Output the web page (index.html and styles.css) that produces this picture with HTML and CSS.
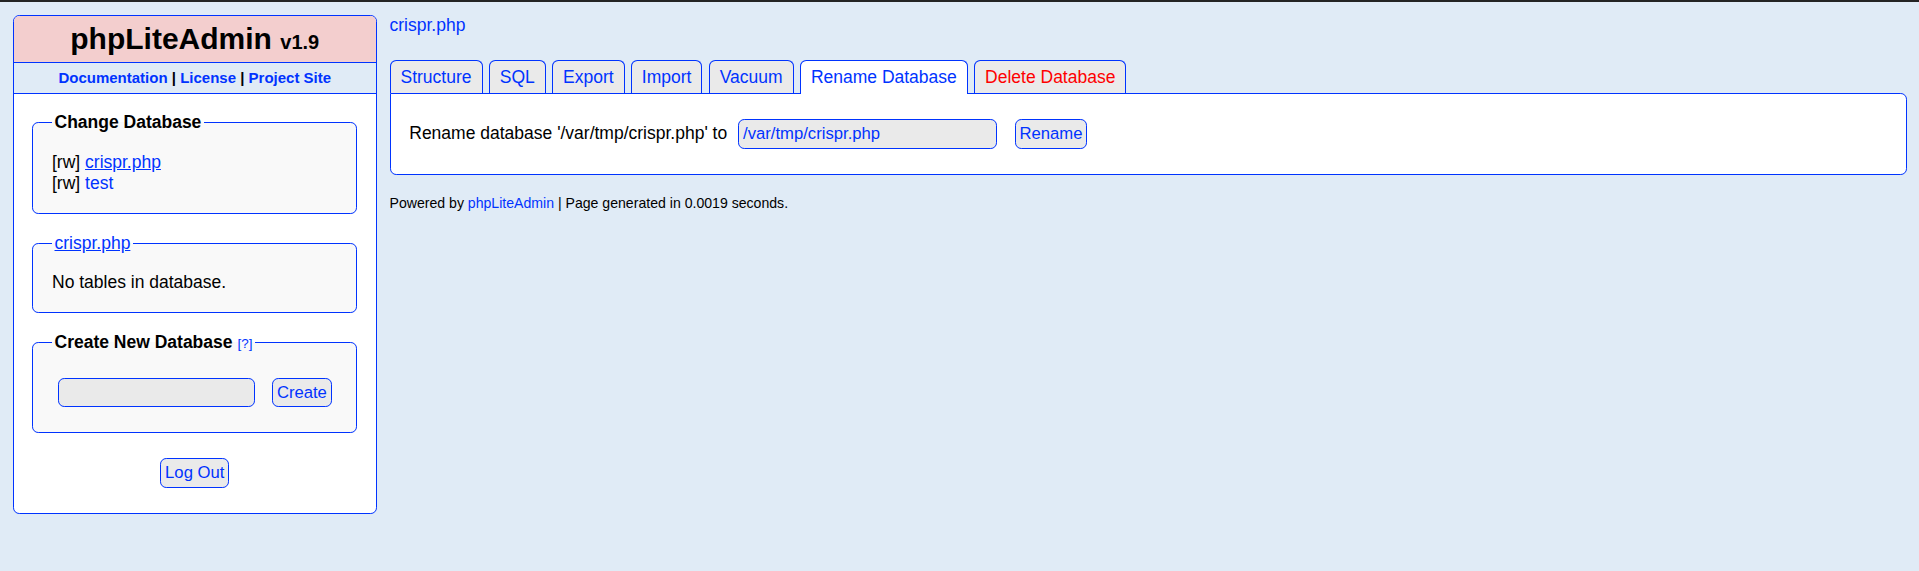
FILE: index.html
```html
<!DOCTYPE html>
<html lang="en">
<head>
  <meta charset="UTF-8">
  <meta name="viewport" content="width=device-width, initial-scale=1.0">
  <title>phpLiteAdmin</title>
<link rel="stylesheet" href="styles.css">
</head>
<body>
<div class="container">
    <div class="leftNav">
        <h1><span class="logo">phpLiteAdmin</span> <span class="version">v1.9</span></h1>
        <div class="headerlinks"><a href="#">Documentation</a> | <a href="#">License</a> | <a href="#">Project Site</a></div>
        <fieldset>
            <legend><b>Change Database</b></legend>
            [rw] <a href="#" class="active_db">crispr.php</a><br>
            [rw] <a href="#">test</a>
        </fieldset>
        <fieldset>
            <legend><a href="#" class="active_db">crispr.php</a></legend>
            No tables in database.
        </fieldset>
        <fieldset>
            <legend><b>Create New Database</b> <a href="#" class="help">[?]</a></legend>
            <form class="inline_form">
                <input type="text" class="new_db" name="new_dbname"> <input type="button" class="btn" value="Create">
            </form>
        </fieldset>
        <div class="logout">
            <input type="button" class="btn" value="Log Out">
        </div>
    </div>

    <div class="content">
        <h2><a href="#">crispr.php</a></h2>
        <div class="tabs">
            <a href="#" class="tab">Structure</a>
            <a href="#" class="tab">SQL</a>
            <a href="#" class="tab">Export</a>
            <a href="#" class="tab">Import</a>
            <a href="#" class="tab">Vacuum</a>
            <a href="#" class="tab tab_pressed">Rename Database</a>
            <a href="#" class="tab delete">Delete Database</a>
        </div>
        <div class="main">
            <form class="inline_form">
                Rename database '/var/tmp/crispr.php' to <input type="text" class="rename_to" value="/var/tmp/crispr.php"> <input type="button" class="btn" value="Rename">
            </form>
        </div>
        <div class="footer">Powered by <a href="#">phpLiteAdmin</a> | Page generated in 0.0019 seconds.</div>
    </div>
</div>
</body>
</html>
```

FILE: styles.css
```css
body {
    margin: 0;
    padding: 0;
    border-top: 2px solid #242424;
    font-family: "Liberation Sans", Arial, sans-serif;
    font-size: 17.5px;
    color: #000;
    background-color: #e0ebf6;
    min-height: 569px;
}
a {
    color: #03f;
    text-decoration: none;
}
.container {
    display: flex;
    align-items: flex-start;
    padding: 12.5px;
}
.leftNav {
    box-sizing: border-box;
    width: 364.5px;
    flex-shrink: 0;
    background-color: #fff;
    border: 1px solid #03f;
    border-radius: 6.25px;
    padding-bottom: 18.75px;
}
h1 {
    margin: 0;
    padding: 6.25px;
    font-size: 30px;
    background-color: #f3cece;
    text-align: center;
    border-radius: 5.25px 5.25px 0 0;
}
h1 .version {
    font-size: 20px;
}
.headerlinks {
    text-align: center;
    padding: 6.25px 18.75px;
    border-top: 1px solid #03f;
    border-bottom: 1px solid #03f;
    font-size: 15px;
    font-weight: bold;
    background-color: #e0ebf6;
}
fieldset {
    margin: 18.75px;
    padding: 18.75px;
    border: 1px solid #03f;
    border-radius: 6.25px;
    background-color: #f9f9f9;
    min-width: 0;
}
legend {
    padding: 0 2.5px;
}
.active_db {
    text-decoration: underline;
}
.help {
    font-size: 13.5px;
}
.inline_form {
    margin: 0;
    white-space: nowrap;
}
input {
    font-family: "Liberation Sans", Arial, sans-serif;
    font-size: 16.67px;
    background-color: #eaeaea;
    color: #03f;
    border: 1px solid #03f;
    margin: 6.25px;
    border-radius: 6.25px;
    padding: 3.75px;
}
.btn {
    cursor: pointer;
}
.new_db {
    box-sizing: border-box;
    width: 196.5px;
}
.rename_to {
    box-sizing: border-box;
    width: 259px;
}
.logout {
    text-align: center;
}
.content {
    flex: 1;
    padding-left: 12.5px;
}
h2 {
    margin: 0 0 23px 0;
    font-size: 17.5px;
    font-weight: normal;
}
.tabs {
    display: flex;
    align-items: flex-start;
    gap: 6.25px;
}
.tab {
    display: block;
    position: relative;
    top: 1px;
    padding: 6.25px 10px 5px 10px;
    border: 1px solid #03f;
    border-bottom: none;
    border-radius: 6.25px 6.25px 0 0;
    background-color: #eaeaea;
}
.tab_pressed {
    padding-bottom: 6.25px;
    background-color: #fff;
}
.delete {
    color: #f00;
}
.main {
    border: 1px solid #03f;
    border-radius: 0 6.25px 6.25px 6.25px;
    padding: 18.75px;
    background-color: #fff;
}
.footer {
    margin-top: 20px;
    font-size: 14.1px;
}
```
